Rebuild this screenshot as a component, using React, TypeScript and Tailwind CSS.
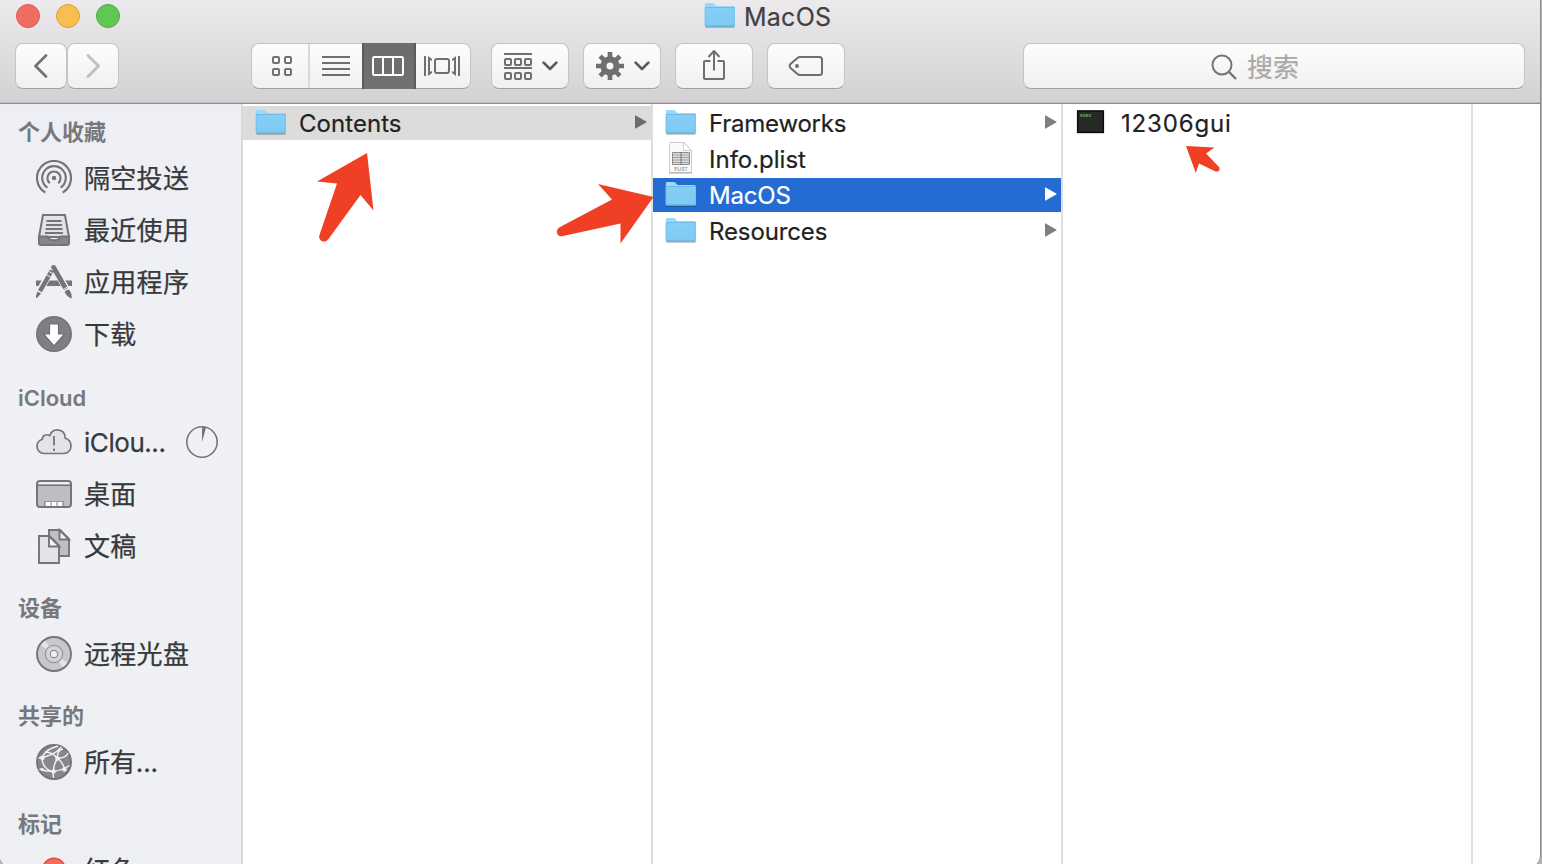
import React from "react";

const CJK = "font-['Inter','Noto_Sans_CJK_SC',sans-serif]";

function Folder() {
  return (
    <svg width="32" height="28" viewBox="0 0 32 28" className="-mt-[3px] shrink-0">
      <defs>
        <linearGradient id="fold" x1="0" y1="0" x2="0" y2="1">
          <stop offset="0" stopColor="#86cef4" />
          <stop offset="1" stopColor="#7ccbf4" />
        </linearGradient>
      </defs>
      <path d="M1.500 26.300h29" stroke="#000" strokeOpacity=".22" strokeWidth="1.400" />
      <path d="M.8 3.400Q.8 2 2.200 2h6.800q1 0 1.600.9l1.400 1.600q.4.500 1.200.5h16q1.600 0 1.600 1.600V24H.8z" fill="#9bd9f8" />
      <path d="M.8 7h30v17.200q0 1.300-1.300 1.300H2.100Q.8 25.500.8 24.200z" fill="url(#fold)" />
      <path d="M1 6.500h30" stroke="#6dbbe6" strokeWidth="1" />
      <path d="M1.300 7v17.500h29V7" fill="none" stroke="#73bfe8" strokeWidth=".8" />
      <path d="M1.300 25.200h29" stroke="#5ba8d3" strokeWidth="1" />
    </svg>
  );
}

function Plist() {
  return (
    <svg width="32" height="34" viewBox="0 0 32 34" className="-mt-[2px] shrink-0">
      <path d="M5 1.500h14l7.500 8v22H4.500V2z" fill="#fafafa" stroke="#cbcbcb" />
      <path d="M4 32h23" stroke="#aaa" strokeWidth="1" />
      <path d="M18.500 1.500v8h8z" fill="#fff" stroke="#c4c4c4" strokeWidth=".8" />
      <path d="M7.500 11.500h17v12h-17z" fill="#ddd" stroke="#8b8b8b" />
      <path d="M8 14h16M8 16.500h16M8 19h16M8 21.500h16" stroke="#999" strokeWidth=".9" />
      <path d="M16 11v13" stroke="#777" />
      <text x="16" y="30.300" textAnchor="middle" fontSize="4.800" fontWeight="500" fill="#8a8a8a" fontFamily="Inter">PLIST</text>
    </svg>
  );
}

function Exec() {
  return (
    <svg width="32" height="28" viewBox="0 0 32 28" className="-mt-[2px] shrink-0">
      <rect x="1.500" y="2" width="28" height="24" rx="1" fill="#b5c4c2" opacity=".7" />
      <rect x="2" y="2.200" width="27" height="22.800" fill="#0c0c0c" />
      <rect x="3.400" y="3.600" width="24.200" height="20" fill="#282828" />
      <text x="5" y="8.800" fontSize="4.800" fontWeight="700" fill="#5cc05c" fontFamily="Liberation Mono">exec</text>
    </svg>
  );
}

type IconName = "airdrop" | "recent" | "apps" | "down" | "cloud" | "desk" | "docs" | "disc" | "globe" | "red";

function SideIcon({ name }: { name: IconName }) {
  const g = "#747579";
  return (
    <svg width="36" height="36" viewBox="0 0 36 36" fill="none" stroke={g} className="shrink-0">
      {name === "airdrop" && (
        <g strokeWidth="2.200">
          <circle cx="18" cy="18" r="2.200" fill={g} stroke="none" />
          <path d="M13.800 23.200a6.600 6.600 0 1 1 8.400 0" />
          <path d="M11.400 27.700a11.800 11.800 0 1 1 13.200 0" />
          <path d="M9.300 32.600a17 17 0 1 1 17.400 0" />
        </g>
      )}
      {name === "recent" && (
        <g>
          <path d="M7 3h22l4 22H3z" fill="#e2e3e6" strokeWidth="2" />
          <path d="M3 24.500h8.500c.8 3 3.200 3.700 6.500 3.700s5.700-.7 6.500-3.700H33v6.300q0 2.200-2 2.200H5q-2 0-2-2.200z" fill="#85868a" strokeWidth="2" />
          <path d="M10.500 9h15M10 13h16M9.500 17h17M9 21h18" strokeWidth="1.800" />
        </g>
      )}
      {name === "apps" && (
        <g>
          <path d="M0 16.500h36v5.500H0z" fill={g} stroke="none" />
          <path d="M17 3L2.500 29M18 3L32.500 29" stroke="#eff0f4" strokeWidth="6.800" />
          <path d="M15.800 6.500L4 27.200" strokeWidth="4.400" />
          <path d="M17.900 4L30 25" strokeWidth="4.800" />
          <circle cx="17.600" cy="3.300" r="2.400" fill={g} stroke="none" />
          <path d="M1.400 27.500l3.700 2.100L1.400 33.500 0 34.300v-2.500z" fill={g} stroke="none" />
          <path d="M28.700 28q1.200-2.500 4.300-2.600 3.200 3.300 2.700 9Q30.500 33 28.700 28z" fill={g} stroke="none" />
          <path d="M12.600 7.300l4.200 2.400M10.600 10.800l4.200 2.400M27.300 25.400l5.200-3" stroke="#eff0f4" strokeWidth="1" />
        </g>
      )}
      {name === "down" && (
        <g>
          <circle cx="18" cy="18" r="17.200" fill="#7e7f83" strokeWidth="1.600" />
          <path d="M13.500 8h9v10h6L18 30 7.500 18h6z" fill="#fff" stroke="#6d6e72" strokeWidth="1.200" />
        </g>
      )}
      {name === "cloud" && (
        <g>
          <path d="M8.300 29.500C4 29.500 1 26.300 1 22.300c0-3.300 2-6 5.300-7.100C6.200 11.500 10.300 9.600 13.700 11.600 15 8 18 5.800 21.300 5.800c4.700 0 8.200 3.600 8 8.400C33 15.300 35 18.300 35 22c0 4-3 7.500-7.300 7.500z" fill="#e3e4e7" strokeWidth="1.700" />
          <path d="M18 12v9.500M18 24.500V27" strokeWidth="1.800" />
        </g>
      )}
      {name === "desk" && (
        <g>
          <rect x="1" y="5" width="34" height="26" rx="3" fill="#bdbec2" strokeWidth="2" />
          <path d="M2 8.500Q2 6 4.500 6h27Q34 6 34 8.500z" fill="#f1f2f5" stroke="none" />
          <path d="M1 9.200h34" strokeWidth="1.600" />
          <path d="M8.500 30v-4.500h19V30" stroke="#94959a" strokeWidth="1.200" />
          <path d="M10 26h4v4h-4zM16 26h4v4h-4zM22 26h4v4h-4z" fill="#fff" stroke="none" />
        </g>
      )}
      {name === "docs" && (
        <g strokeWidth="1.900">
          <path d="M13 2h11l9 9v17H13z" fill="#bfc0c4" />
          <path d="M23.500 2v9.500H33z" fill="#eff0f3" />
          <path d="M3 8h10.500L23 17.500V35H3z" fill="#e3e4e7" />
          <path d="M13 8v10.500h10.500z" fill="#f3f4f6" />
        </g>
      )}
      {name === "disc" && (
        <g>
          <circle cx="18" cy="18" r="17" fill="#c7c8cb" strokeWidth="1.900" />
          <path d="M18 18L4.800 9.300A16 16 0 0 1 9.300 4.700zM18 18l13.200 8.700a16 16 0 0 1-4.500 4.600z" fill="#e4e5e8" stroke="none" />
          <circle cx="18" cy="18" r="8.700" fill="#d3d4d7" stroke="#97989c" strokeWidth="1.200" />
          <circle cx="18" cy="18" r="3.700" fill="#f1f2f4" stroke="#8a8b8f" strokeWidth="1.200" />
        </g>
      )}
      {name === "globe" && (
        <g>
          <circle cx="18" cy="18" r="17" fill="#87888c" strokeWidth="1.900" />
          <g stroke="#f2f3f5" strokeWidth="1.400">
            <path d="M2.500 14C11 13 20 9.500 25.500 3M6 14C8 8.500 14 4 22 2M6 14C6 21 11 27 17.500 27.500M21.500 14.500C21 9 22.500 6 27 5M21.500 14.500C18 19 16.500 28 17.500 34M21.500 14.500C25 17 28 21 28.500 26M21.500 14.500C27 14 31 12 32 9M3.500 25C12 29 24 28 33.500 21.500M21.500 14.500C18 10 13.500 8 9 8" />
          </g>
          <g fill="#f2f3f5" stroke="none">
            <circle cx="6.500" cy="13.700" r="2.300" />
            <circle cx="21.500" cy="14.500" r="2.300" />
            <circle cx="17.500" cy="27.500" r="2.200" />
            <circle cx="28.500" cy="25.500" r="2.200" />
            <circle cx="6.300" cy="25.500" r="1.600" />
          </g>
        </g>
      )}
      {name === "red" && <circle cx="18" cy="17.500" r="11.300" fill="#f36c60" stroke="#e5483f" strokeWidth="1.400" />}
    </svg>
  );
}

function SideItem({ icon, label, extra, track = "tracking-[0.3px]" }: { icon: IconName; label: string; extra?: React.ReactNode; track?: string }) {
  return (
    <div className="flex h-[52px] shrink-0 items-center pl-9 pb-[2px]">
      <SideIcon name={icon} />
      <span className={"ml-3 mt-px whitespace-nowrap text-[26px] leading-9 text-[#38393c] [-webkit-text-stroke:0.25px_#38393c] " + track}>{label}</span>
      {extra}
    </div>
  );
}

function Heading({ label, first, latin }: { label: string; first?: boolean; latin?: boolean }) {
  return (
    <div className={(first ? "h-[49px]" : "h-[56px]") + (latin ? " pb-[3px]" : " pb-[5px]") + " flex shrink-0 items-end pl-[18px] text-[22px] font-semibold leading-8 text-[#77787c]"}>
      {label}
    </div>
  );
}

function Row({ icon, label, arrow, tone, track = "" }: { icon: React.ReactNode; label: string; arrow?: boolean; tone?: "blue" | "gray"; track?: string }) {
  const bg = tone === "blue" ? "bg-[#256cd2] text-white" : tone === "gray" ? "bg-[#dcdcdc] text-[#222]" : "text-[#222]";
  const fill = tone === "blue" ? "#fff" : tone === "gray" ? "#6c6c6c" : "#7f7f7f";
  return (
    <div className={"flex h-[34px] shrink-0 items-center pl-3 pr-1 " + bg}>
      {icon}
      <span className={"ml-3 mt-[2px] text-[24px] leading-[34px] [-webkit-text-stroke:0.2px_currentColor] " + track}>{label}</span>
      {arrow && (
        <svg width="12" height="14" viewBox="0 0 12 14" className="-mt-[3px] ml-auto">
          <path d="M0 .8Q0 0 .7.400l10.500 6q.8.500 0 1L.7 13.500q-.7.400-.7-.4z" fill={fill} />
        </svg>
      )}
    </div>
  );
}

const BTN =
  "flex h-[46px] shrink-0 items-center rounded-[8px] border border-[#c5c3c6] border-b-[#a3a1a4] bg-linear-to-b from-[#fdfdfd] to-[#f0f0f0]";

function Chevron() {
  return (
    <svg width="16" height="10" viewBox="0 0 16 10" fill="none" stroke="#59595b" strokeWidth="2.600" strokeLinecap="round" strokeLinejoin="round">
      <path d="M1.600 1.600L8 8l6.400-6.400" />
    </svg>
  );
}

function Toolbar() {
  return (
    <div className="flex items-start pl-[15px] pt-[10px]">
      <div className={BTN + " w-[52px] justify-center"}>
        <svg width="16" height="26" viewBox="0 0 16 26" fill="none" stroke="#747474" strokeWidth="2.800" strokeLinecap="round" strokeLinejoin="round">
          <path d="M13 2.500L2.500 13 13 23.500" />
        </svg>
      </div>
      <div className={BTN + " w-[52px] justify-center"}>
        <svg width="16" height="26" viewBox="0 0 16 26" fill="none" stroke="#bfbfbf" strokeWidth="2.800" strokeLinecap="round" strokeLinejoin="round">
          <path d="M3 2.500L13.500 13 3 23.500" />
        </svg>
      </div>
      <div className={BTN + " ml-[132px] w-[220px]"}>
        <div className="flex h-[44px] w-[58px] items-center justify-center border-r-2 border-[#d9d9d9]">
          <svg width="20" height="20" viewBox="0 0 20 20" fill="none" stroke="#6f6f6f" strokeWidth="2" className="ml-1">
            <rect x="1" y="1" width="6" height="6" rx="1.200" />
            <rect x="13" y="1" width="6" height="6" rx="1.200" />
            <rect x="1" y="13" width="6" height="6" rx="1.200" />
            <rect x="13" y="13" width="6" height="6" rx="1.200" />
          </svg>
        </div>
        <div className="flex w-[52px] justify-center">
          <svg width="28" height="20" viewBox="0 0 28 20" stroke="#6f6f6f" strokeWidth="2">
            <path d="M0 1h28M0 7h28M0 13h28M0 19h28" />
          </svg>
        </div>
        <div className="flex h-[46px] w-[54px] shrink-0 items-center justify-center border-x-2 border-[#5b5b5b] bg-linear-to-b from-[#6c6c6c] to-[#717171] pr-[2px]">
          <svg width="32" height="20" viewBox="0 0 32 20" fill="none" stroke="#fff" strokeWidth="2" className="shrink-0">
            <rect x="1" y="1" width="30" height="18" rx="1.500" />
            <path d="M11 1v18M21 1v18" />
          </svg>
        </div>
        <div className="flex flex-1 justify-center pr-[2px]">
          <svg width="36" height="20" viewBox="0 0 36 20" fill="none" stroke="#6f6f6f" strokeWidth="2">
            <path d="M1 0v20M35 0v20" />
            <path d="M4 0L8 3v2L6 4v12l2-1v2l-4 3zM32 0l-4 3v2l2-1v12l-2-1v2l4 3z" fill="#6f6f6f" stroke="none" />
            <rect x="11" y="3" width="14" height="14" rx="2" />
          </svg>
        </div>
      </div>
      <div className={BTN + " ml-[20px] w-[78px] pl-[12px]"}>
        <svg width="28" height="28" viewBox="0 0 28 28" fill="none" stroke="#6f6f6f" strokeWidth="2">
          <path d="M0 2h28M0 16h28" />
          <rect x="1" y="7" width="6" height="6" rx="1" />
          <rect x="11" y="7" width="6" height="6" rx="1" />
          <rect x="21" y="7" width="6" height="6" rx="1" />
          <rect x="1" y="21" width="6" height="6" rx="1" />
          <rect x="11" y="21" width="6" height="6" rx="1" />
          <rect x="21" y="21" width="6" height="6" rx="1" />
        </svg>
        <span className="ml-[10px]"><Chevron /></span>
      </div>
      <div className={BTN + " ml-[14px] w-[78px] pl-[12px]"}>
        <svg width="28" height="28" viewBox="0 0 28 28" fill="none" stroke="#6f6f6f">
          <circle cx="14" cy="14" r="6.600" strokeWidth="6.200" />
          <path d="M14 0v6M14 22v6M0 14h6M22 14h6M4.100 4.100l4.300 4.300M19.600 19.600l4.300 4.300M23.900 4.100l-4.300 4.300M8.400 19.600l-4.300 4.300" strokeWidth="4.600" />
        </svg>
        <span className="ml-[10px]"><Chevron /></span>
      </div>
      <div className={BTN + " ml-[14px] w-[78px] justify-center"}>
        <svg width="24" height="32" viewBox="0 0 24 32" fill="none" stroke="#6f6f6f" strokeWidth="2" strokeLinejoin="round" className="-mt-[2px]">
          <path d="M8.500 12H3q-1 0-1 1v16q0 1 1 1h18q1 0 1-1V13q0-1-1-1h-5.500M12 21.500V2.500M6.500 8L12 2l5.500 6" />
        </svg>
      </div>
      <div className={BTN + " ml-[14px] w-[78px] justify-center"}>
        <svg width="36" height="22" viewBox="0 0 36 22" fill="none" stroke="#6f6f6f" strokeWidth="2">
          <path d="M12 2h19.500Q34 2 34 4.500v13q0 2.500-2.500 2.500H12q-1.500 0-2.500-1L2.500 13q-1.700-2 0-4L9.500 3q1-1 2.500-1z" />
          <circle cx="9" cy="11" r="2" fill="#6f6f6f" stroke="none" />
        </svg>
      </div>
      <div className={BTN + " ml-[178px] w-[502px] pl-[187px]"}>
        <svg width="26" height="26" viewBox="0 0 26 26" fill="none" stroke="#747474" strokeWidth="2" className="mt-[2px]">
          <circle cx="11" cy="11" r="9.500" />
          <path d="M17.700 17.700l7.300 7.300" strokeWidth="2.400" />
        </svg>
        <span className="ml-[10px] mt-[3px] text-[26px] leading-none text-[#a9a9a9] [-webkit-text-stroke:0.25px_#a9a9a9]">搜索</span>
      </div>
    </div>
  );
}

export default function App() {
  return (
    <div className={"relative h-[864px] w-[1542px] overflow-hidden bg-[#b3b3b3] antialiased " + CJK}>
      <div className="flex h-[866px] w-[1541px] flex-col overflow-hidden rounded-b-[10px] border-r border-[#8e8e8e] bg-white">
        <header className="h-[104px] shrink-0 border-b border-[#8f8d90] bg-linear-to-b from-[#eceaed] to-[#d3d1d4] shadow-[inset_0_-1px_0_#bdbbbe]">
          <div className="flex h-[33px] items-center pl-4">
            <div className="flex gap-4 pb-px">
              <span className="size-6 rounded-full border border-[#dc5850] bg-[#ef6c60]" />
              <span className="size-6 rounded-full border border-[#dca03c] bg-[#f6bf50]" />
              <span className="size-6 rounded-full border border-[#4bae40] bg-[#62c655]" />
            </div>
            <div className="ml-[584px] flex items-center">
              <Folder />
              <span className="ml-[8px] text-[25px] leading-8 tracking-[0.25px] text-[#414143] [-webkit-text-stroke:0.2px_#414143]">MacOS</span>
            </div>
          </div>
          <Toolbar />
        </header>
        <main className="flex min-h-0 flex-1">
          <aside className="flex w-[243px] shrink-0 flex-col overflow-hidden border-r-2 border-[#d8d9dc] bg-linear-to-b from-[#eeeff4] via-[#f0f1f4] to-[#edeff2]">
            <Heading label="个人收藏" first />
            <SideItem icon="airdrop" label="隔空投送" />
            <SideItem icon="recent" label="最近使用" />
            <SideItem icon="apps" label="应用程序" />
            <SideItem icon="down" label="下载" />
            <Heading label="iCloud" latin />
            <SideItem
              icon="cloud"
              label="iClou..."
              track="tracking-[-0.45px]"
              extra={
                <svg width="32" height="32" viewBox="0 0 32 32" className="ml-auto mr-[23px]">
                  <circle cx="16" cy="16" r="15.200" fill="none" stroke="#747579" strokeWidth="1.600" />
                  <path d="M16 16V1q2.500 0 4 .8z" fill="#747579" />
                </svg>
              }
            />
            <SideItem icon="desk" label="桌面" />
            <SideItem icon="docs" label="文稿" />
            <Heading label="设备" />
            <SideItem icon="disc" label="远程光盘" />
            <Heading label="共享的" />
            <SideItem icon="globe" label="所有..." track="tracking-[-0.1px]" />
            <Heading label="标记" />
            <SideItem icon="red" label="红色" />
          </aside>
          <section className="flex w-[410px] shrink-0 flex-col border-r-2 border-[#dedede] pt-[2px]">
            <Row icon={<Folder />} label="Contents" arrow tone="gray" track="tracking-[0.05px]" />
          </section>
          <section className="flex w-[410px] shrink-0 flex-col gap-[2px] border-r-2 border-[#dedede] pt-[2px]">
            <Row icon={<Folder />} label="Frameworks" arrow track="tracking-[-0.22px]" />
            <Row icon={<Plist />} label="Info.plist" />
            <Row icon={<Folder />} label="MacOS" arrow tone="blue" track="tracking-[-0.2px]" />
            <Row icon={<Folder />} label="Resources" arrow track="tracking-[-0.12px]" />
          </section>
          <section className="flex w-[410px] shrink-0 flex-col border-r-2 border-[#dedede] pt-[2px]">
            <Row icon={<Exec />} label="12306gui" track="pl-[2px] tracking-[0.85px]" />
          </section>
        </main>
      </div>
      <svg className="pointer-events-none absolute left-0 top-0" width="1542" height="864" fill="#ef4026">
        <path d="M367 153L373.500 210.500 360.500 195 328.500 239q-2.500 3.500-6.500 2.300-4-2-2.300-7L337 183.500 317 181.500z" />
        <path d="M653.500 197L620.500 243.500V223.500L563 236q-4.500 1-6-2.500-1-4 3-6.500L612 199.500 598 184z" />
        <path d="M1186 146L1214.500 147.500 1206 153.500 1219 167q1.500 2.500-.5 4-1.500 1-4 0L1199 163.500 1195.800 173z" />
      </svg>
    </div>
  );
}
